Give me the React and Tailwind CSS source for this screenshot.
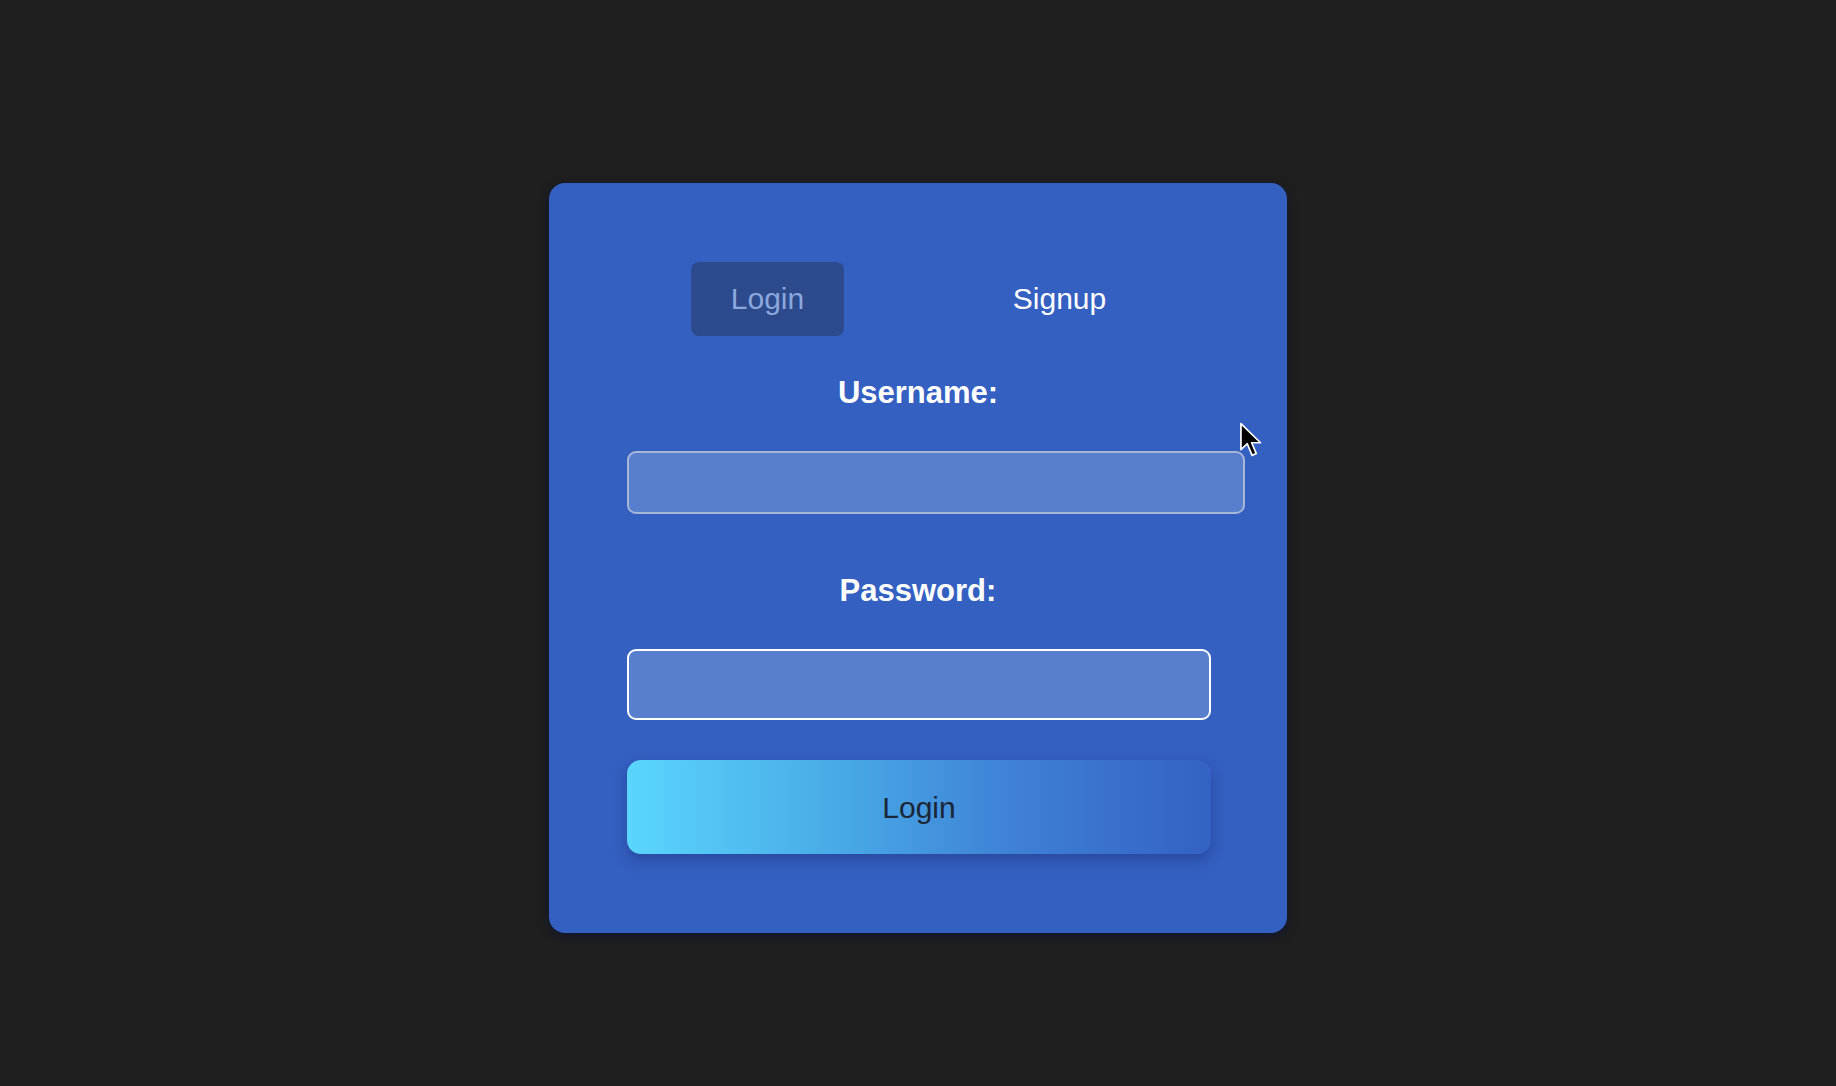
import React from "react";

export default function App() {
  return (
    <div
      className="relative w-full min-h-[1086px] bg-[#1f1f1f] pt-[183px]"
      style={{ fontFamily: '"Liberation Sans", Arial, sans-serif' }}
    >
      <div className="mx-auto w-[738px] rounded-[16px] bg-[#3460c2] px-[78px] pt-[79px] pb-[79px] shadow-[0_3px_10px_rgba(5,15,60,0.55)]">
        <div className="flex items-center pl-[64px] gap-[139px]">
          <button className="w-[153px] h-[74px] rounded-[8px] bg-[#2d4a8d] text-[30px] text-[#8ba7dd] leading-none">
            Login
          </button>
          <button className="w-[153px] h-[74px] rounded-[8px] text-[30px] text-white leading-none">
            Signup
          </button>
        </div>

        <div className="mt-[40px] text-center text-[31px] leading-[34px] font-bold text-white">
          Username:
        </div>
        <div className="mt-[41px] w-[618px] h-[63px] rounded-[9px] border-2 border-[#a8b6d8] bg-[#577fcd]"></div>

        <div className="mt-[60px] text-center text-[31px] leading-[34px] font-bold text-white">
          Password:
        </div>
        <div className="mt-[41px] w-[584px] h-[71px] rounded-[9px] border-2 border-white bg-[#577fcd]"></div>

        <button className="mt-[40px] w-[584px] h-[94px] rounded-[14px] bg-[linear-gradient(90deg,#5ad6fd_0%,#47a5e4_40%,#3f82d6_65%,#3461c4_100%)] text-[30px] text-[#1b2636] shadow-[0_6px_14px_rgba(20,30,90,0.35)]">
          Login
        </button>
      </div>

      <svg
        className="absolute left-[1239px] top-[422px]"
        width="24"
        height="36"
        viewBox="0 0 22 34"
      >
        <path
          d="M1.5 1.5 L1.5 26 L7.5 20.5 L12 31.5 L16 29.8 L11.6 19.6 L20 19.6 Z"
          fill="#000"
          stroke="#fff"
          strokeWidth="1.6"
          strokeLinejoin="round"
        />
      </svg>
    </div>
  );
}
